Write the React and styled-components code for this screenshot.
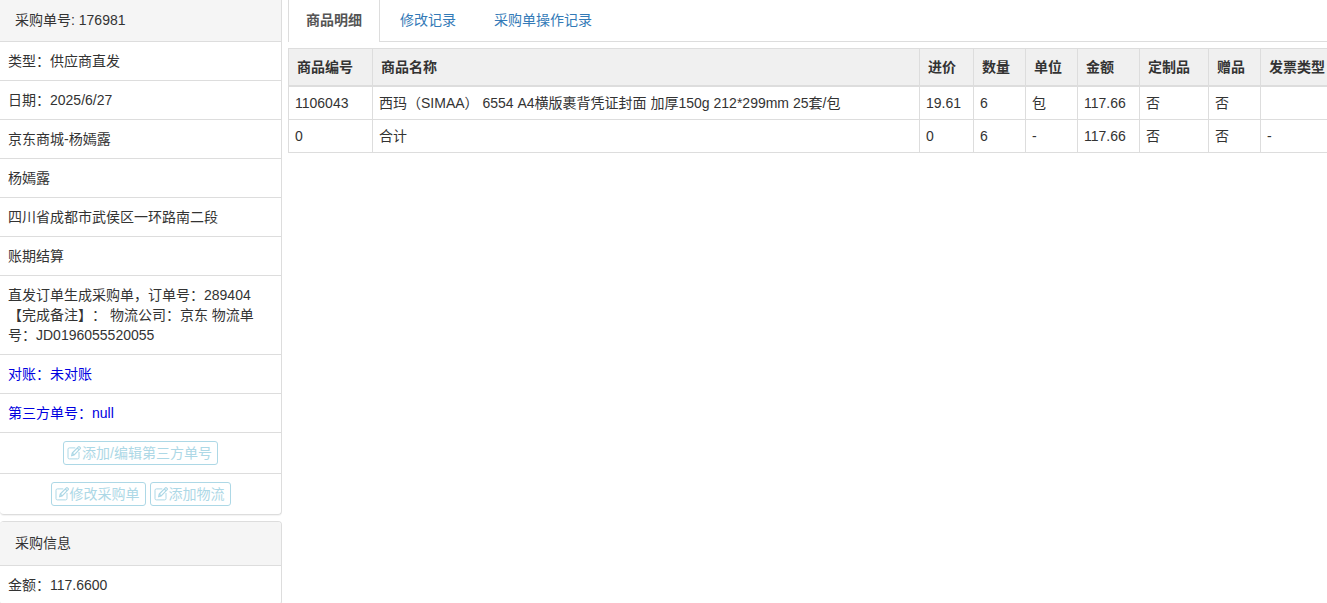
import React from "react";
import styled, { createGlobalStyle } from "styled-components";

const GlobalStyle = createGlobalStyle`
  * { box-sizing: border-box; }
  body {
    margin: 0;
    background: #fff;
    color: #333;
    font: 14px/20px "Liberation Sans", "Noto Sans CJK SC", sans-serif;
    text-spacing-trim: space-all;
  }
`;

const Page = styled.div`
  display: flex;
  gap: 6px;
  height: 100vh;
  overflow: hidden;
`;

const Sidebar = styled.aside`
  flex: 0 0 282px;
  display: flex;
  flex-direction: column;
  gap: 6px;
  overflow-y: auto;
  scrollbar-width: none;
`;

const Panel = styled.section`
  flex: none;
  border: 1px solid #ddd;
  border-width: ${(p) => (p.$first ? "0 1px 1px 0" : "1px 1px 1px 0")};
  border-radius: ${(p) => (p.$first ? "0 0 4px 4px" : "4px")};
  box-shadow: 0 1px 1px rgba(0, 0, 0, 0.05);
  overflow: hidden;
`;

const PanelHeading = styled.h2`
  margin: 0;
  padding: ${(p) => (p.$tall ? "11px 15px 12px" : "10px 15px 11px")};
  background: #f5f5f5;
  font-size: 14px;
  font-weight: 400;
`;

const InfoList = styled.ul`
  margin: 0;
  padding: 0;
  list-style: none;
`;

const InfoRow = styled.li`
  padding: 9px 16px 9px 8px;
  border-top: 1px solid #ddd;
  color: ${(p) => (p.$accent ? "#0000e0" : "inherit")};
`;

const ActionRow = styled.li`
  display: flex;
  justify-content: center;
  gap: 4px;
  padding: 8px 0;
  border-top: 1px solid #ddd;
`;

const OutlineButton = styled.button`
  display: inline-flex;
  align-items: center;
  gap: 1px;
  height: 24px;
  padding: 0 5px 0 3px;
  border: 1px solid #add8e6;
  border-radius: 3px;
  background: #fff;
  color: #add8e6;
  font: inherit;
  white-space: nowrap;
  cursor: pointer;
`;

const EditSvg = styled.svg`
  flex: none;
  width: 14px;
  height: 14px;
`;

const Main = styled.main`
  flex: 1;
  min-width: 0;
  overflow: hidden;
`;

const TabBar = styled.nav`
  display: flex;
  gap: 2px;
  height: 42px;
  margin-bottom: 6px;
  border-bottom: 1px solid #ddd;
`;

const Tab = styled.a`
  height: 42px;
  padding: 10px 17px;
  border: solid ${(p) => (p.$active ? "#ddd" : "transparent")};
  border-width: 0 1px;
  background: ${(p) => (p.$active ? "#fff" : "transparent")};
  color: ${(p) => (p.$active ? "#555" : "#337ab7")};
  font-weight: ${(p) => (p.$active ? 700 : 400)};
  text-decoration: none;
`;

const GoodsTable = styled.table`
  width: calc(100% + 9px);
  table-layout: fixed;
  border-collapse: separate;
  border-spacing: 0;
  border: solid #ddd;
  border-width: 1px 0 0 1px;
`;

const Col = styled.col`
  width: ${(p) => p.$width};
`;

const HeadCell = styled.th`
  padding: 8px 0 8px 8px;
  border: solid #ddd;
  border-width: 0 1px 2px 0;
  background: #f0f0f0;
  text-align: left;
  white-space: nowrap;
`;

const Cell = styled.td`
  padding: 6px;
  border: solid #ddd;
  border-width: 0 1px 1px 0;
  white-space: nowrap;
`;

function EditIcon() {
  return (
    <EditSvg viewBox="0 0 14 14" fill="none" stroke="currentColor" strokeLinejoin="round" aria-hidden="true">
      <path d="M8.3 1.9H2.4Q1 1.9 1 3.3v8.2q0 1.4 1.4 1.4h8.2q1.4 0 1.4-1.4V6" />
      <path strokeWidth="1.2" d="M4.6 9.8 5.3 7 11.4.9q.5-.5 1.1 0l.7.7q.5.6 0 1.1L7.2 8.9zM5.3 7l1.9 1.9M10.3 2l1.8 1.8" />
    </EditSvg>
  );
}

function ActionButton({ children }) {
  return (
    <OutlineButton type="button">
      <EditIcon />
      {children}
    </OutlineButton>
  );
}

const details = [
  "类型：供应商直发",
  "日期：2025/6/27",
  "京东商城-杨嫣露",
  "杨嫣露",
  "四川省成都市武侯区一环路南二段",
  "账期结算",
];

const columns = [
  ["商品编号", "84px"],
  ["商品名称", "auto"],
  ["进价", "54px"],
  ["数量", "52px"],
  ["单位", "52px"],
  ["金额", "62px"],
  ["定制品", "69px"],
  ["赠品", "52px"],
  ["发票类型", "75px"],
];

const goods = [
  ["1106043", "西玛（SIMAA） 6554 A4横版裹背凭证封面 加厚150g 212*299mm 25套/包", "19.61", "6", "包", "117.66", "否", "否", ""],
  ["0", "合计", "0", "6", "-", "117.66", "否", "否", "-"],
];

export default function App() {
  return (
    <>
      <GlobalStyle />
      <Page>
        <Sidebar>
          <Panel $first>
            <PanelHeading>采购单号: 176981</PanelHeading>
            <InfoList>
              {details.map((text) => (
                <InfoRow key={text}>{text}</InfoRow>
              ))}
              <InfoRow>
                直发订单生成采购单，订单号：289404
                <br />
                【完成备注】： 物流公司：京东 物流单
                <br />
                号：JD0196055520055
              </InfoRow>
              <InfoRow $accent>对账：未对账</InfoRow>
              <InfoRow $accent>第三方单号：null</InfoRow>
              <ActionRow>
                <ActionButton>添加/编辑第三方单号</ActionButton>
              </ActionRow>
              <ActionRow>
                <ActionButton>修改采购单</ActionButton>
                <ActionButton>添加物流</ActionButton>
              </ActionRow>
            </InfoList>
          </Panel>
          <Panel>
            <PanelHeading $tall>采购信息</PanelHeading>
            <InfoList>
              <InfoRow>金额：117.6600</InfoRow>
            </InfoList>
          </Panel>
        </Sidebar>
        <Main>
          <TabBar>
            <Tab href="#goods" $active>商品明细</Tab>
            <Tab href="#changes">修改记录</Tab>
            <Tab href="#operations">采购单操作记录</Tab>
          </TabBar>
          <GoodsTable>
            <colgroup>
              {columns.map(([name, width]) => (
                <Col key={name} $width={width} />
              ))}
            </colgroup>
            <thead>
              <tr>
                {columns.map(([name]) => (
                  <HeadCell key={name} scope="col">{name}</HeadCell>
                ))}
              </tr>
            </thead>
            <tbody>
              {goods.map((row) => (
                <tr key={row[0]}>
                  {row.map((value, i) => (
                    <Cell key={columns[i][0]}>{value}</Cell>
                  ))}
                </tr>
              ))}
            </tbody>
          </GoodsTable>
        </Main>
      </Page>
    </>
  );
}
